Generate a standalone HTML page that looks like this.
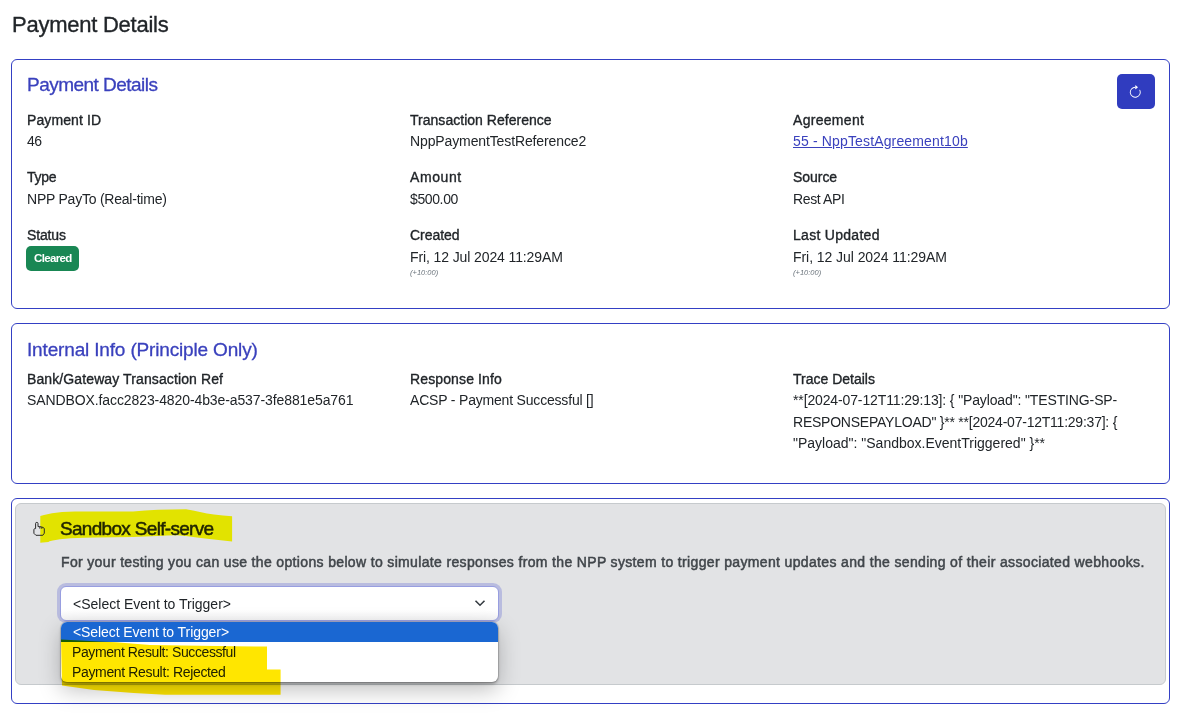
<!DOCTYPE html>
<html>
<head>
<meta charset="utf-8">
<style>
html,body{margin:0;padding:0;background:#fff;}
body{width:1179px;height:713px;position:relative;overflow:hidden;font-family:"Liberation Sans",sans-serif;color:#212529;font-size:14px;}
.t{position:absolute;white-space:nowrap;line-height:1;}
.lbl{font-size:14px;-webkit-text-stroke:0.35px #212529;}
.val{font-size:14px;}
.card{position:absolute;left:11px;width:1157px;border:1px solid #3440c4;border-radius:6px;box-sizing:content-box;}
.ttl{color:#3a41bd;font-size:18.5px;-webkit-text-stroke:0.3px #3a41bd;}
.small{font-size:7px;font-style:italic;color:#6c757d;}
</style>
</head>
<body>
<div class="t" id="h1" style="left:12px;top:14px;font-size:22px;letter-spacing:-0.25px;-webkit-text-stroke:0.35px #212529;">Payment Details</div>

<div class="card" id="c1" style="top:59px;height:248px;"></div>
<div class="t ttl" id="c1t" style="left:27px;top:75px;letter-spacing:-0.53px;font-size:19px;">Payment Details</div>
<div id="btn" style="position:absolute;left:1117px;top:74px;width:38px;height:35px;background:#303cbf;border-radius:5px;"></div>
<svg style="position:absolute;left:1128.3px;top:84.6px;" width="14.5" height="14.5" viewBox="0 0 16 16" fill="#fff"><path fill-rule="evenodd" d="M8 3a5 5 0 1 0 4.546 2.914.5.5 0 0 1 .908-.417A6 6 0 1 1 8 2z"/><path d="M8 4.466V.534a.25.25 0 0 1 .41-.192l2.36 1.966c.12.1.12.284 0 .384L8.41 4.658A.25.25 0 0 1 8 4.466"/></svg>

<div class="t lbl" id="l1" style="left:27px;top:113px;letter-spacing:0.11px;">Payment ID</div>
<div class="t val" id="v1" style="left:27px;top:134px;letter-spacing:-0.5px;">46</div>
<div class="t lbl" id="l2" style="left:27px;top:170px;letter-spacing:-0.3px;">Type</div>
<div class="t val" id="v2" style="left:27px;top:192px;letter-spacing:-0.23px;">NPP PayTo (Real-time)</div>
<div class="t lbl" id="l3" style="left:27px;top:228px;letter-spacing:-0.16px;">Status</div>
<div id="badge" style="position:absolute;left:26px;top:246px;width:53px;height:25px;background:#198754;border-radius:5px;"></div>
<div class="t" id="bt" style="left:34px;top:253px;font-size:11.5px;font-weight:bold;color:#fff;letter-spacing:-0.66px;">Cleared</div>

<div class="t lbl" id="l4" style="left:410px;top:113px;letter-spacing:0.025px;">Transaction Reference</div>
<div class="t val" id="v4" style="left:410px;top:134px;letter-spacing:-0.12px;">NppPaymentTestReference2</div>
<div class="t lbl" id="l5" style="left:410px;top:170px;letter-spacing:0.6px;">Amount</div>
<div class="t val" id="v5" style="left:410px;top:192px;letter-spacing:-0.38px;">$500.00</div>
<div class="t lbl" id="l6" style="left:410px;top:228px;letter-spacing:-0.05px;">Created</div>
<div class="t val" id="v6" style="left:410px;top:250px;letter-spacing:-0.11px;">Fri, 12 Jul 2024 11:29AM</div>
<div class="t small" id="s6" style="left:410px;top:269px;font-size:7.5px;">(+10:00)</div>

<div class="t lbl" id="l7" style="left:793px;top:113px;letter-spacing:0.3px;">Agreement</div>
<div class="t val" id="v7" style="left:793px;top:134px;color:#3a41bd;text-decoration:underline;letter-spacing:0.15px;">55 - NppTestAgreement10b</div>
<div class="t lbl" id="l8" style="left:793px;top:170px;letter-spacing:-0.04px;">Source</div>
<div class="t val" id="v8" style="left:793px;top:192px;letter-spacing:-0.37px;">Rest API</div>
<div class="t lbl" id="l9" style="left:793px;top:228px;letter-spacing:0.29px;">Last Updated</div>
<div class="t val" id="v9" style="left:793px;top:250px;letter-spacing:-0.06px;">Fri, 12 Jul 2024 11:29AM</div>
<div class="t small" id="s9" style="left:793px;top:269px;font-size:7.5px;">(+10:00)</div>

<div class="card" id="c2" style="top:323px;height:159px;"></div>
<div class="t ttl" id="c2t" style="left:27px;top:340px;letter-spacing:-0.16px;font-size:19px;">Internal Info (Principle Only)</div>
<div class="t lbl" id="l10" style="left:27px;top:372px;letter-spacing:0.11px;">Bank/Gateway Transaction Ref</div>
<div class="t val" id="v10" style="left:27px;top:393px;letter-spacing:-0.1px;">SANDBOX.facc2823-4820-4b3e-a537-3fe881e5a761</div>
<div class="t lbl" id="l11" style="left:410px;top:372px;letter-spacing:0.13px;">Response Info</div>
<div class="t val" id="v11" style="left:410px;top:393px;letter-spacing:-0.19px;">ACSP - Payment Successful []</div>
<div class="t lbl" id="l12" style="left:793px;top:372px;letter-spacing:0px;">Trace Details</div>
<div class="t val" id="v12a" style="left:793px;top:393px;letter-spacing:-0.13px;">**[2024-07-12T11:29:13]: { "Payload": "TESTING-SP-</div>
<div class="t val" id="v12b" style="left:793px;top:415px;letter-spacing:-0.23px;">RESPONSEPAYLOAD" }** **[2024-07-12T11:29:37]: {</div>
<div class="t val" id="v12c" style="left:793px;top:436px;letter-spacing:0px;">"Payload": "Sandbox.EventTriggered" }**</div>

<div class="card" id="c3" style="top:498px;height:204px;"></div>
<div id="gray" style="position:absolute;left:15px;top:503px;width:1149px;height:180px;background:#e2e3e5;border:1px solid #c6cacd;border-radius:6px;"></div>

<div class="t" id="sbh" style="left:60px;top:519px;font-size:19px;color:#212529;-webkit-text-stroke:0.5px #212529;letter-spacing:-0.69px;">Sandbox Self-serve</div>
<div class="t" id="sbd" style="left:61px;top:555px;font-size:14px;color:#41464b;-webkit-text-stroke:0.5px #41464b;letter-spacing:0.347px;">For your testing you can use the options below to simulate responses from the NPP system to trigger payment updates and the sending of their associated webhooks.</div>
<div id="ring" style="position:absolute;left:57px;top:583px;width:445px;height:40px;border-radius:9px;background:#b9bcdf;"></div>
<div id="sel" style="position:absolute;left:60px;top:586px;width:437px;height:33px;border:1px solid #989ee0;border-radius:6px;background:linear-gradient(#fff 70%,#f4f4f5);"></div>
<div class="t val" id="selt" style="left:73px;top:597px;">&lt;Select Event to Trigger&gt;</div>
<svg style="position:absolute;left:474px;top:598px;" width="12" height="10" viewBox="0 0 12 10"><path d="M1.5 2.8 L6 7.2 L10.5 2.8" fill="none" stroke="#343a40" stroke-width="1.6"/></svg>
<div id="dd" style="position:absolute;left:61px;top:622px;width:437px;height:60px;border-radius:6px;background:#fff;box-shadow:0 0 0 1px rgba(0,0,0,.12),0 2px 3px rgba(0,0,0,.25),0 8px 22px rgba(0,0,0,.25);overflow:hidden;">
 <div style="position:absolute;left:0;top:0;width:100%;height:20px;background:#1a67d2;"></div>
</div>
<div class="t val" id="o1" style="left:73px;top:625px;color:#fff;letter-spacing:-0.08px;">&lt;Select Event to Trigger&gt;</div>
<div class="t val" id="o2" style="left:72px;top:645px;letter-spacing:-0.41px;">Payment Result: Successful</div>
<div class="t val" id="o3" style="left:72px;top:665px;letter-spacing:-0.35px;">Payment Result: Rejected</div>
<svg style="position:absolute;left:0;top:0;mix-blend-mode:multiply;" width="1179" height="713">
<polygon fill="#ffff00" points="40.3,516 44,515 52,513.2 62,512 75,511.6 88,511.4 110,511.4 133,511.4 145,510.6 158,509.8 172,509.4 186,509.3 193,510.6 200,512.1 207,513.4 214,514.5 223,515.5 232.1,516.3 232.1,541.5 223,540.6 214,539.6 205,538.5 195,537.3 186,536.1 176.6,535.2 167,535.4 158,535.9 145,536.6 133,537 115,537.2 97,537.4 84,537.8 70.6,538.3 60,539.3 52.8,540.5 49.5,541.2 48.4,541.9 40.3,542.7"/>
<polygon fill="#ffe600" points="61,639.5 80,640.5 99,641.5 116,642.3 150,645.1 233,646.3 267,646.5 267,669.4 280.6,669.4 280.6,694.8 165,694.8 133.6,692.9 94,690 62,685.5"/>
</svg>
<svg style="position:absolute;left:0;top:0;" width="1179" height="713">
<path d="M35.6,528.6 V523.4 Q35.6,522.4 36.8,522.4 Q38,522.4 38,523.4 V526.6 L39.8,526.6 L41.8,527 L43.4,527.6 Q44.3,528 44.3,529 V533.2 L42.8,535.3 H35.9 L33.9,533.3 V529.6 Q33.9,528.5 35.6,528.6 M39.8,526.8 V528.6 M41.8,527.1 V528.8" fill="none" stroke="#2b2b2b" stroke-width="1"/>
</svg>

</body>
</html>
